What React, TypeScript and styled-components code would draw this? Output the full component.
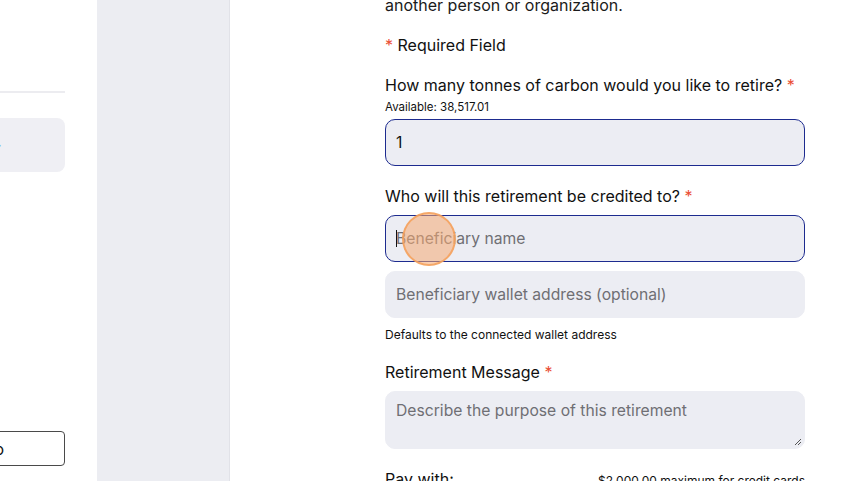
import React from "react";
import styled, { createGlobalStyle } from "styled-components";

const GlobalStyle = createGlobalStyle`
  html, body {
    margin: 0;
    padding: 0;
    background: #ffffff;
    overflow: hidden;
  }
  body {
    font-family: "Inter", "Noto Sans", sans-serif;
    color: #111111;
  }
`;

// layout
const Page = styled.div`
  display: flex;
  width: 860px;
  height: 481px;
  overflow: hidden;
`;

const Sidebar = styled.aside`
  width: 97px;
  flex-shrink: 0;
  overflow: hidden;
  background: #ffffff;
`;

const SidebarInner = styled.div`
  width: 245px;
  margin-left: -180px;
  display: flex;
  flex-direction: column;
  height: 481px;
`;

const Divider = styled.div`
  height: 2px;
  background: #ececf0;
  margin-top: 91px;
`;

const NavItem = styled.div`
  height: 54px;
  margin-top: 25px;
  border-radius: 8px;
  background: #efeff4;
  display: flex;
  align-items: center;
  justify-content: flex-end;
  padding-right: 64px;
  color: #6aa8f0;
  font-size: 10px;
`;

const SideButton = styled.button`
  margin-top: auto;
  margin-bottom: 15px;
  height: 35px;
  border: 1px solid #4a4a4a;
  border-radius: 4px;
  background: #ffffff;
  font-family: "Inter", sans-serif;
  font-size: 16px;
  color: #111;
  text-align: right;
  padding-right: 60px;
`;

const Gutter = styled.div`
  width: 132px;
  flex-shrink: 0;
  background: #ecedf2;
  border-right: 1px solid #e1e2e8;
`;

const Main = styled.main`
  flex: 1;
  background: #ffffff;
  padding-left: 155px;
`;

const Form = styled.div`
  width: 420px;
  margin-top: -6px;
  display: flex;
  flex-direction: column;
`;

const Intro = styled.p`
  margin: 0;
  font-size: 16px;
  line-height: 22px;
  color: #1b1b1b;
`;

const Label = styled.div<{ $gap?: number }>`
  margin-top: ${(p) => p.$gap ?? 0}px;
  font-size: 16px;
  line-height: 22px;
  color: #111111;
`;

const Star = styled.span`
  color: #ea4d33;
`;

const Hint = styled.div<{ $gap?: number; $size?: number }>`
  margin-top: ${(p) => p.$gap ?? 0}px;
  font-size: ${(p) => p.$size ?? 11.5}px;
  line-height: 14px;
  color: #111111;
`;

const Field = styled.div<{ $focused?: boolean; $gap?: number; $tall?: boolean }>`
  position: relative;
  margin-top: ${(p) => p.$gap ?? 0}px;
  height: ${(p) => (p.$tall ? 58 : 47)}px;
  box-sizing: border-box;
  border-radius: 10px;
  background: #ecedf3;
  border: 1px solid ${(p) => (p.$focused ? "#1d2b8f" : "#ecedf3")};
  display: flex;
  align-items: ${(p) => (p.$tall ? "flex-start" : "center")};
  padding: ${(p) => (p.$tall ? "9px 10px" : "0 10px")};
  font-size: 15.7px;
`;

const Value = styled.span`
  color: #111111;
`;

const Placeholder = styled.span`
  color: #6f6f74;
`;

const Caret = styled.span`
  display: inline-block;
  width: 1px;
  height: 17px;
  background: #111;
  margin-right: -1px;
  vertical-align: middle;
`;

const Grip = styled.svg`
  position: absolute;
  right: 2px;
  bottom: 2px;
`;

const ClickMark = styled.div`
  position: absolute;
  left: 16px;
  top: -4px;
  width: 54px;
  height: 54px;
  border-radius: 50%;
  box-sizing: border-box;
  border: 2px solid rgba(245, 160, 90, 0.85);
  background: rgba(246, 170, 115, 0.55);
  pointer-events: none;
`;

const PayRow = styled.div`
  margin-top: 20px;
  display: flex;
  justify-content: space-between;
  align-items: baseline;
`;

const PayLabel = styled.span`
  font-size: 16px;
`;

const PayNote = styled.span`
  font-size: 12px;
`;

export default function App() {
  return (
    <>
      <GlobalStyle />
      <Page>
        <Sidebar>
          <SidebarInner>
            <Divider />
            <NavItem>›</NavItem>
            <SideButton>Go</SideButton>
          </SidebarInner>
        </Sidebar>
        <Gutter />
        <Main>
          <Form>
            <Intro>another person or organization.</Intro>
            <Label $gap={18}>
              <Star>*</Star> Required Field
            </Label>
            <Label $gap={18}>
              How many tonnes of carbon would you like to retire? <Star>*</Star>
            </Label>
            <Hint $gap={4}>Available: 38,517.01</Hint>
            <Field $focused $gap={5}>
              <Value>1</Value>
            </Field>
            <Label $gap={19}>
              Who will this retirement be credited to? <Star>*</Star>
            </Label>
            <Field $focused $gap={8}>
              <Caret />
              <Placeholder>Beneficiary name</Placeholder>
              <ClickMark />
            </Field>
            <Field $gap={9}>
              <Placeholder>Beneficiary wallet address (optional)</Placeholder>
            </Field>
            <Hint $gap={10} $size={12}>
              Defaults to the connected wallet address
            </Hint>
            <Label $gap={19}>
              Retirement Message <Star>*</Star>
            </Label>
            <Field $tall $gap={8}>
              <Placeholder>Describe the purpose of this retirement</Placeholder>
              <Grip width="8" height="8" viewBox="0 0 8 8">
                <path d="M7 1 L1 7 M7 4 L4 7" stroke="#555" strokeWidth="1" />
              </Grip>
            </Field>
            <PayRow>
              <PayLabel>Pay with:</PayLabel>
              <PayNote>$2,000.00 maximum for credit cards</PayNote>
            </PayRow>
          </Form>
        </Main>
      </Page>
    </>
  );
}
